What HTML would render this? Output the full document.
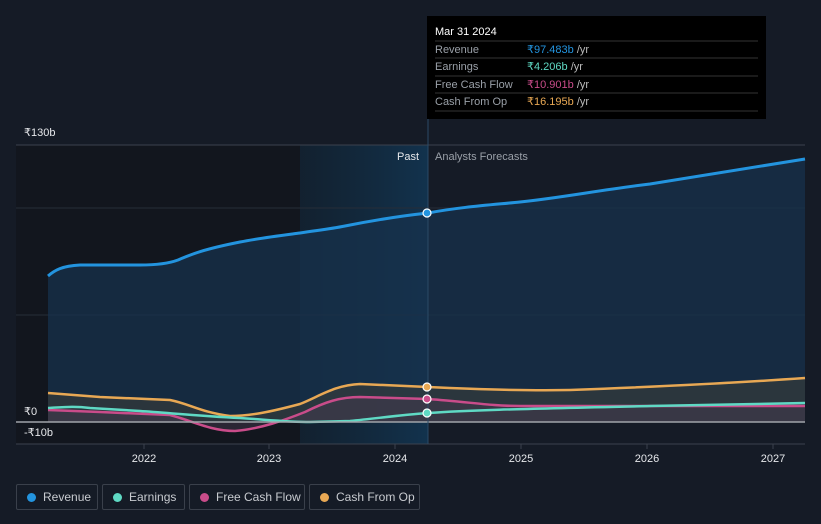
<!DOCTYPE html>
<html><head><meta charset="utf-8"><style>
body{margin:0;width:821px;height:524px;background:#151b26;font-family:"Liberation Sans",sans-serif;overflow:hidden;position:relative}
.lg{position:absolute;top:484px;height:26px;border:1px solid #3a404b;border-radius:2px;box-sizing:border-box;color:#c8cbd0;font-size:12px;line-height:25px;padding-left:26px}
.lg i{position:absolute;left:10px;top:8px;width:9px;height:9px;border-radius:50%}
</style></head><body>
<svg width="821" height="524" style="position:absolute;left:0;top:0">
<defs>
<linearGradient id="hl" x1="0" x2="1" y1="0" y2="0"><stop offset="0" stop-color="#112536" stop-opacity=".6"/><stop offset="1" stop-color="#123552" stop-opacity=".9"/></linearGradient>
</defs>
<rect x="16" y="145" width="284" height="299" fill="#12161e"/>
<rect x="300" y="145" width="128" height="299" fill="url(#hl)"/>
<line x1="16" y1="145" x2="805" y2="145" stroke="#3c424d"/>
<line x1="16" y1="208" x2="805" y2="208" stroke="#262d38"/>
<line x1="16" y1="315" x2="805" y2="315" stroke="#262d38"/>
<path d="M48,276 C55,270 62,266 80,265 L140,265 C160,265 170,263 178,260 C190,255 200,250 240,242 C260,238 285,235 300,233 C320,230 330,229 345,226 C370,221 400,216 428,213 C460,207 490,205 520,202 C560,198 600,190 650,184 C700,176 750,168 805,159 L805,422 L48,422 Z" fill="#17324c" fill-opacity=".75"/>
<path d="M48,393 L100,397 L170,400 C190,404 200,412 230,416 C250,416 270,412 300,404 C320,396 335,385 360,384 L428,387 C470,389 520,391 570,390 C650,387 720,384 805,378 L805,422 L48,422 Z" fill="#3a3d3a" fill-opacity=".6"/>
<path d="M48,410 L100,412 L170,415 C190,420 210,431 235,431 C260,429 285,420 305,412 C325,402 340,397 360,397 L428,399 C470,402 490,406 520,406 L805,406 L805,422 L48,422 Z" fill="#4a3a50" fill-opacity=".45"/>
<path d="M48,276 C55,270 62,266 80,265 L140,265 C160,265 170,263 178,260 C190,255 200,250 240,242 C260,238 285,235 300,233 C320,230 330,229 345,226 C370,221 400,216 428,213 C460,207 490,205 520,202 C560,198 600,190 650,184 C700,176 750,168 805,159" fill="none" stroke="#2394df" stroke-width="3"/>
<path d="M48,393 L100,397 L170,400 C190,404 200,412 230,416 C250,416 270,412 300,404 C320,396 335,385 360,384 L428,387 C470,389 520,391 570,390 C650,387 720,384 805,378" fill="none" stroke="#e8a854" stroke-width="2.5"/>
<path d="M48,410 L100,412 L170,415 C190,420 210,431 235,431 C260,429 285,420 305,412 C325,402 340,397 360,397 L428,399 C470,402 490,406 520,406 L805,406" fill="none" stroke="#c94c8a" stroke-width="2.5"/>
<path d="M48,408 C65,407 75,406 90,408 L140,411 C170,413 200,416 240,418 C270,420 290,422 310,422 L350,421 C380,418 400,415 428,413 C470,410 520,409 650,406 L805,403" fill="none" stroke="#5fd9c4" stroke-width="2.5"/>
<line x1="16" y1="422" x2="805" y2="422" stroke="#a0a4aa" stroke-width="1.5"/>
<line x1="16" y1="444" x2="805" y2="444" stroke="#3c424d"/>
<line x1="428" y1="118" x2="428" y2="444" stroke="#2a4a66"/>
<g stroke="#3c424d"><line x1="144" y1="444" x2="144" y2="449"/><line x1="269" y1="444" x2="269" y2="449"/><line x1="395" y1="444" x2="395" y2="449"/><line x1="521" y1="444" x2="521" y2="449"/><line x1="647" y1="444" x2="647" y2="449"/><line x1="773" y1="444" x2="773" y2="449"/></g>
<g stroke="#fff" stroke-width="1.2"><circle cx="427" cy="213" r="4" fill="#2394df"/><circle cx="427" cy="387" r="4" fill="#e8a854"/><circle cx="427" cy="399" r="4" fill="#c94c8a"/><circle cx="427" cy="413" r="4" fill="#5fd9c4"/></g>
<g font-family="Liberation Sans,sans-serif" font-size="11" fill="#e6e8eb">
<text x="24" y="136">₹130b</text><text x="24" y="415">₹0</text><text x="24" y="436">-₹10b</text>
<text x="419" y="160" text-anchor="end" font-size="11">Past</text>
<text x="435" y="160" fill="#9aa0a8">Analysts Forecasts</text>
<g text-anchor="middle"><text x="144" y="462">2022</text><text x="269" y="462">2023</text><text x="395" y="462">2024</text><text x="521" y="462">2025</text><text x="647" y="462">2026</text><text x="773" y="462">2027</text></g>
</g>
<rect x="427" y="16" width="339" height="103" fill="#000"/>
<g font-family="Liberation Sans,sans-serif" font-size="11">
<text x="435" y="35" fill="#fff">Mar 31 2024</text>
<g stroke="#333"><line x1="435" y1="41" x2="758" y2="41"/><line x1="435" y1="58" x2="758" y2="58"/><line x1="435" y1="76" x2="758" y2="76"/><line x1="435" y1="93" x2="758" y2="93"/><line x1="435" y1="111" x2="758" y2="111"/></g>
<g fill="#9aa0a8"><text x="435" y="53">Revenue</text><text x="435" y="70">Earnings</text><text x="435" y="88">Free Cash Flow</text><text x="435" y="105">Cash From Op</text></g>
<text x="527" y="53"><tspan fill="#2394df">₹97.483b</tspan><tspan fill="#bbb"> /yr</tspan></text>
<text x="527" y="70"><tspan fill="#5fd9c4">₹4.206b</tspan><tspan fill="#bbb"> /yr</tspan></text>
<text x="527" y="88"><tspan fill="#c94c8a">₹10.901b</tspan><tspan fill="#bbb"> /yr</tspan></text>
<text x="527" y="105"><tspan fill="#e8a854">₹16.195b</tspan><tspan fill="#bbb"> /yr</tspan></text>
</g>
</svg>
<div class="lg" style="left:16px;width:82px"><i style="background:#2394df"></i>Revenue</div>
<div class="lg" style="left:102px;width:83px"><i style="background:#5fd9c4"></i>Earnings</div>
<div class="lg" style="left:189px;width:116px"><i style="background:#c94c8a"></i>Free Cash Flow</div>
<div class="lg" style="left:309px;width:111px"><i style="background:#e8a854"></i>Cash From Op</div>
</body></html>
